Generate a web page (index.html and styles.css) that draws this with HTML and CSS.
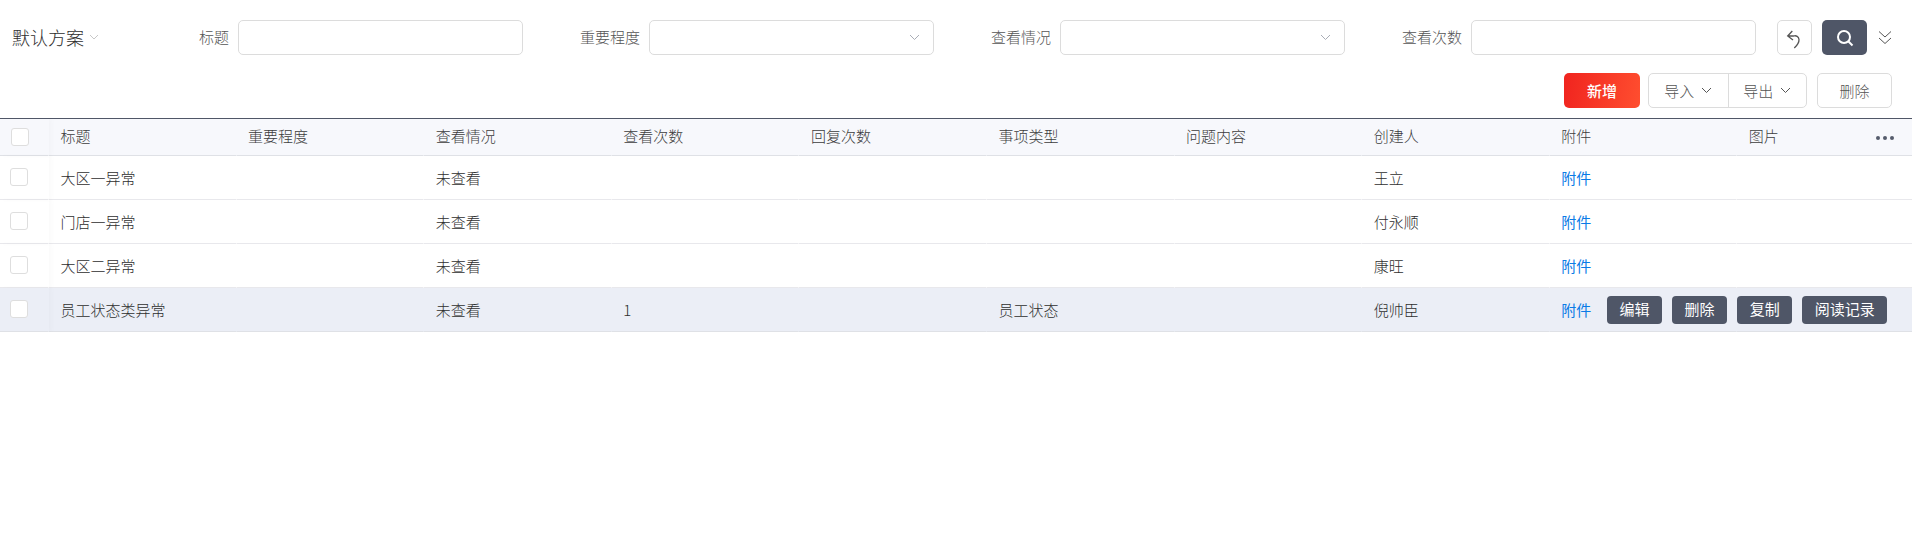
FILE: index.html
```html
<!DOCTYPE html>
<html lang="zh-CN">

<head>
    <meta charset="UTF-8">
    <title>异常列表</title>
    <link rel="stylesheet" href="styles.css">
</head>

<body>
    <div class="filter-bar">
        <div class="scheme">默认方案
            <svg class="scheme-arrow" width="10" height="6" viewBox="0 0 10 6"><path d="M1 1l4 4 4-4" /></svg>
        </div>
        <div class="field">
            <label>标题</label>
            <div class="input"></div>
        </div>
        <div class="field">
            <label>重要程度</label>
            <div class="input">
                <svg class="arrow" width="11" height="7" viewBox="0 0 11 7"><path d="M1 1l4.500 4.500L10 1" /></svg>
            </div>
        </div>
        <div class="field">
            <label>查看情况</label>
            <div class="input">
                <svg class="arrow" width="11" height="7" viewBox="0 0 11 7"><path d="M1 1l4.500 4.500L10 1" /></svg>
            </div>
        </div>
        <div class="field">
            <label>查看次数</label>
            <div class="input"></div>
        </div>
        <div class="filter-actions">
            <div class="btn-reset">
                <svg width="33" height="33" viewBox="0 0 33 33"><path d="M14.300 10L9.700 15l5.300 4M9.700 15h6c2.500-.8 5 .5 5.300 3.500.2 3-2 6-4.700 8.500" /></svg>
            </div>
            <div class="btn-search">
                <svg width="18" height="18" viewBox="0 0 18 18"><circle cx="8" cy="8" r="6" /><path d="M12.500 12.500L16.500 16.500" /></svg>
            </div>
            <svg class="btn-more" width="14" height="15" viewBox="0 0 14 15"><path d="M1 1.500l6 5.500 6-5.500M1 8l6 5.500L13 8" /></svg>
        </div>
    </div>

    <div class="toolbar">
        <div class="btn btn-add">新增</div>
        <div class="btn-group">
            <div class="btn-item">导入
                <svg width="11" height="7" viewBox="0 0 11 7"><path d="M1 1l4.500 4.500L10 1" /></svg>
            </div>
            <div class="btn-item">导出
                <svg width="11" height="7" viewBox="0 0 11 7"><path d="M1 1l4.500 4.500L10 1" /></svg>
            </div>
        </div>
        <div class="btn btn-delete">删除</div>
    </div>

    <div class="table-wrap">
        <table>
            <thead>
                <tr>
                    <th class="check"><span class="checkbox"></span></th>
                    <th>标题</th>
                    <th>重要程度</th>
                    <th>查看情况</th>
                    <th>查看次数</th>
                    <th>回复次数</th>
                    <th>事项类型</th>
                    <th>问题内容</th>
                    <th>创建人</th>
                    <th>附件</th>
                    <th>图片</th>
                </tr>
            </thead>
            <tbody>
                <tr>
                    <td class="check"><span class="checkbox"></span></td>
                    <td>大区一异常</td>
                    <td></td>
                    <td>未查看</td>
                    <td></td>
                    <td></td>
                    <td></td>
                    <td></td>
                    <td>王立</td>
                    <td><a class="link">附件</a></td>
                    <td></td>
                </tr>
                <tr>
                    <td class="check"><span class="checkbox"></span></td>
                    <td>门店一异常</td>
                    <td></td>
                    <td>未查看</td>
                    <td></td>
                    <td></td>
                    <td></td>
                    <td></td>
                    <td>付永顺</td>
                    <td><a class="link">附件</a></td>
                    <td></td>
                </tr>
                <tr>
                    <td class="check"><span class="checkbox"></span></td>
                    <td>大区二异常</td>
                    <td></td>
                    <td>未查看</td>
                    <td></td>
                    <td></td>
                    <td></td>
                    <td></td>
                    <td>康旺</td>
                    <td><a class="link">附件</a></td>
                    <td></td>
                </tr>
                <tr class="active">
                    <td class="check"><span class="checkbox"></span></td>
                    <td>员工状态类异常</td>
                    <td></td>
                    <td>未查看</td>
                    <td>1</td>
                    <td></td>
                    <td>员工状态</td>
                    <td></td>
                    <td>倪帅臣</td>
                    <td>
                        <a class="link">附件</a>
                        <span class="row-actions">
                            <span class="row-btn">编辑</span>
                            <span class="row-btn">删除</span>
                            <span class="row-btn">复制</span>
                            <span class="row-btn">阅读记录</span>
                        </span>
                    </td>
                    <td></td>
                </tr>
            </tbody>
        </table>
        <div class="col-more"><i></i><i></i><i></i></div>
    </div>
</body>

</html>
```
FILE: styles.css
```css
* {
    margin: 0;
    padding: 0;
    box-sizing: border-box;
}

body {
    font-family: "Noto Sans CJK SC", "Liberation Sans", sans-serif;
    font-size: 15px;
    font-weight: 300;
    color: #2e2e2e;
    background: #fff;
}

svg {
    fill: none;
    stroke: currentColor;
}

.filter-bar {
    display: flex;
    align-items: center;
    height: 35px;
    margin-top: 20px;
    padding-left: 12px;
}

.scheme {
    width: 100px;
    font-size: 18px;
    line-height: 35px;
    white-space: nowrap;
}

.scheme-arrow {
    margin-left: 1px;
    color: #c8c8c8;
    vertical-align: 5px;
}

.field {
    display: flex;
    justify-content: flex-end;
    align-items: center;
    width: 411px;
}

.field label {
    margin-right: 9px;
    margin-bottom: 2px;
    color: #555;
}

.input {
    display: flex;
    justify-content: flex-end;
    align-items: center;
    width: 285px;
    height: 35px;
    padding-right: 13px;
    border: 1px solid #dcdcdc;
    border-radius: 5px;
}

.arrow {
    color: #a9adb6;
}

.filter-actions {
    display: flex;
    align-items: center;
    margin-left: 21px;
}

.btn-reset {
    width: 35px;
    height: 35px;
    border: 1px solid #dcdcdc;
    border-radius: 5px;
    color: #555;
}

.btn-reset svg {
    display: block;
    stroke-width: 1.300;
}

.btn-search {
    display: flex;
    justify-content: center;
    align-items: center;
    width: 45px;
    height: 35px;
    margin-left: 10px;
    border-radius: 5px;
    background: #4f5667;
    color: #fff;
}

.btn-search svg {
    stroke-width: 2;
}

.btn-more {
    margin-left: 11px;
    color: #555;
}

.toolbar {
    display: flex;
    justify-content: flex-end;
    align-items: center;
    height: 35px;
    margin-top: 18px;
    padding-right: 20px;
}

.btn {
    width: 75px;
    height: 35px;
    line-height: 33px;
    text-align: center;
    border-radius: 5px;
}

.btn-add {
    width: 76px;
    margin-right: 8px;
    border: 1px solid transparent;
    background: linear-gradient(100deg, #f0241f, #ff4e2f);
    background-origin: border-box;
    color: #fff;
    font-weight: 500;
}

.btn-delete {
    margin-left: 10px;
    border: 1px solid #dcdcdc;
    color: #555;
}

.btn-group {
    display: flex;
    height: 35px;
    border: 1px solid #dcdcdc;
    border-radius: 5px;
    color: #555;
}

.btn-item {
    display: flex;
    justify-content: center;
    align-items: center;
    gap: 7px;
    width: 78.500px;
}

.btn-item + .btn-item {
    border-left: 1px solid #dcdcdc;
}

.table-wrap {
    position: relative;
    margin-top: 10px;
    border-top: 1px solid #4f5667;
    overflow: hidden;
}

table {
    width: 1925px;
    table-layout: fixed;
    border-collapse: separate;
    border-spacing: 0;
}

th,
td {
    width: 187.600px;
    padding-left: 11.500px;
    text-align: left;
    font-weight: 300;
    white-space: nowrap;
    border-bottom: 1px solid #e8e8ec;
    border-right: 1px solid transparent;
}

th {
    height: 37px;
    padding-bottom: 3px;
    background: #f7f8fc;
    color: #3c3c3c;
    border-bottom-color: #dfe1e6;
}

td {
    height: 44px;
}

.active td {
    background: #ebeef6;
    border-bottom-color: #dfe1e6;
}

.check {
    position: relative;
    width: 49px;
    padding: 0;
    box-shadow: 3px 0 5px rgba(0, 0, 0, 0.02);
}

.checkbox {
    display: block;
    width: 18px;
    height: 18px;
    margin-left: 10px;
    background: #fff;
    border: 1px solid #dedede;
    border-radius: 3px;
}

th .checkbox {
    margin-left: 11px;
}

td .checkbox {
    position: relative;
    top: -1px;
}

.link {
    color: #0a7be6;
    font-weight: 400;
}

.row-actions {
    display: inline-flex;
    gap: 10px;
    margin-left: 12.500px;
    vertical-align: 1px;
}

.row-btn {
    padding: 0 12.500px;
    height: 28px;
    line-height: 26px;
    background: #4f5667;
    color: #fff;
    font-weight: 400;
    border-radius: 4px;
}

.col-more {
    position: absolute;
    top: 17px;
    right: 18px;
    display: flex;
    gap: 3px;
}

.col-more i {
    width: 4px;
    height: 4px;
    border-radius: 50%;
    background: #555c6c;
}
```
